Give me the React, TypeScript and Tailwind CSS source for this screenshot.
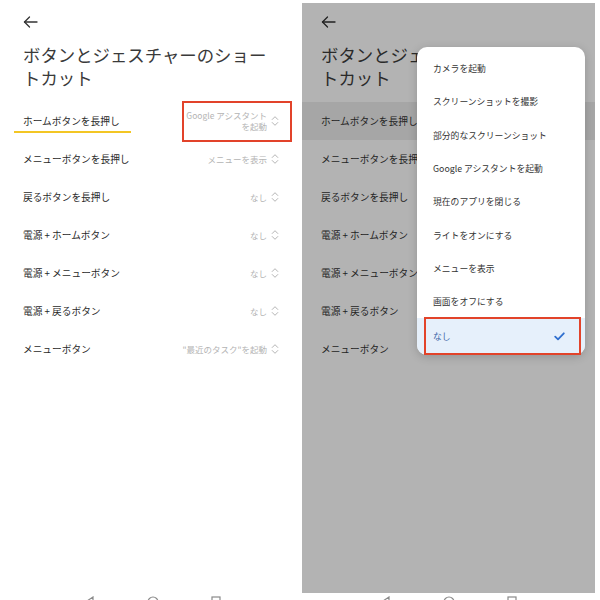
import React from "react";

const FONT = { fontFamily: '"Noto Sans CJK JP", "Noto Sans", sans-serif' };

const rows: { label: string; value: React.ReactNode }[] = [
  {
    label: "ホームボタンを長押し",
    value: (
      <span className="flex flex-col items-end leading-[11px]">
        <span>Google アシスタント</span>
        <span>を起動</span>
      </span>
    ),
  },
  { label: "メニューボタンを長押し", value: "メニューを表示" },
  { label: "戻るボタンを長押し", value: "なし" },
  { label: "電源 + ホームボタン", value: "なし" },
  { label: "電源 + メニューボタン", value: "なし" },
  { label: "電源 + 戻るボタン", value: "なし" },
  { label: "メニューボタン", value: '"最近のタスク"を起動' },
];

const menuItems = [
  "カメラを起動",
  "スクリーンショットを撮影",
  "部分的なスクリーンショット",
  "Google アシスタントを起動",
  "現在のアプリを閉じる",
  "ライトをオンにする",
  "メニューを表示",
  "画面をオフにする",
];

function Chevrons({ color }: { color: string }) {
  return (
    <svg width="8" height="12" viewBox="0 0 8 12" fill="none" stroke={color} strokeWidth="1" strokeLinecap="round" strokeLinejoin="round">
      <path d="M1.2 4.5 L4 1.7 L6.8 4.5" />
      <path d="M1.2 7.5 L4 10.3 L6.8 7.5" />
    </svg>
  );
}

function BackArrow({ color }: { color: string }) {
  return (
    <svg width="15" height="12" viewBox="0 0 15 12" fill="none" stroke={color} strokeWidth="1.3" strokeLinecap="round" strokeLinejoin="round">
      <path d="M14 6 H1.5" />
      <path d="M6.5 1 L1.5 6 L6.5 11" />
    </svg>
  );
}

function NavBar({ pl }: { pl: string }) {
  return (
    <div className={`flex items-start gap-[52px] pt-[3px] ${pl}`}>
      <svg width="10" height="10" viewBox="0 0 10 10" fill="none" stroke="#8a8a8a" strokeWidth="1.2">
        <path d="M8 1 L2 5 L8 9 Z" />
      </svg>
      <svg width="12" height="12" viewBox="0 0 12 12" fill="none" stroke="#8a8a8a" strokeWidth="1.2">
        <circle cx="6" cy="6" r="5" />
      </svg>
      <svg width="10" height="10" viewBox="0 0 10 10" fill="none" stroke="#8a8a8a" strokeWidth="1.2">
        <rect x="1" y="1" width="8" height="8" />
      </svg>
    </div>
  );
}

function Screen({ dim }: { dim: boolean }) {
  const text = dim ? "text-[#242424]" : "text-[#2a2a2a]";
  const titleColor = dim ? "text-[#2a2a2a]" : "text-[#3a3a3a]";
  const valueColor = dim ? "#7c7c7c" : "#b4b4b4";
  return (
    <div className={`relative h-[590px] ${dim ? "bg-[#b3b3b3] w-[293px] pl-[19px]" : "bg-white w-[297px] pl-[23px]"}`}>
      <div className="pt-[13px]">
        <BackArrow color={dim ? "#222" : "#333"} />
      </div>
      <div className={`mt-[15px] text-[17.4px] leading-[23px] font-normal ${titleColor}`}>
        ボタンとジェスチャーのショー
        <br />
        トカット
      </div>
      <div className="mt-[13px]">
        {rows.map((r, i) => (
          <div key={i} className="relative h-[38px] flex items-center justify-between pr-[18px]">
            {dim && i === 0 && <div className="absolute left-[-19px] right-0 top-0 bottom-0 bg-[#a6a6a6]" />}
            <span className={`relative text-[9.7px] ${text}`}>{r.label}</span>
            <span className="relative flex items-center gap-[4px] text-[8.5px]" style={{ color: valueColor }}>
              {r.value}
              <Chevrons color={valueColor} />
            </span>
          </div>
        ))}
      </div>
    </div>
  );
}

export default function App() {
  return (
    <div className="relative w-[600px] h-[600px] bg-white overflow-hidden" style={FONT}>
      <div className="flex gap-[5px] pt-[3px]">
        <div className="flex flex-col">
          <Screen dim={false} />
          <NavBar pl="pl-[85px]" />
        </div>
        <div className="flex flex-col">
          <Screen dim={true} />
          <NavBar pl="pl-[79px]" />
        </div>
      </div>

      {/* annotations on left screen */}
      <div className="absolute left-[182px] top-[101px] w-[110px] h-[41px] border-2 border-[#e2432a]" />
      <div className="absolute left-[14px] top-[131px] w-[117px] h-[2px] bg-[#f3c624]" />

      {/* dropdown menu */}
      <div className="absolute left-[417px] top-[47px] w-[168px] h-[308px] bg-white rounded-[10px] shadow-[0_2px_10px_rgba(0,0,0,0.18)] overflow-hidden flex flex-col pt-[5px]">
        {menuItems.map((m) => (
          <div key={m} className="h-[33.3px] flex items-center pl-[16px] text-[8.8px] text-[#333]">
            {m}
          </div>
        ))}
        <div className="flex-1 flex items-center justify-between bg-[#e6f0fb] pl-[16px] pr-[20px] text-[8.8px] text-[#3f68a8]">
          <span>なし</span>
          <svg width="11" height="9" viewBox="0 0 11 9" fill="none" stroke="#2f6fcf" strokeWidth="1.8" strokeLinecap="round" strokeLinejoin="round">
            <path d="M1.2 4.6 L4 7.3 L9.8 1.3" />
          </svg>
        </div>
      </div>
      <div className="absolute left-[424px] top-[317px] w-[157px] h-[38px] border-[2.5px] border-[#e2432a]" />
    </div>
  );
}
